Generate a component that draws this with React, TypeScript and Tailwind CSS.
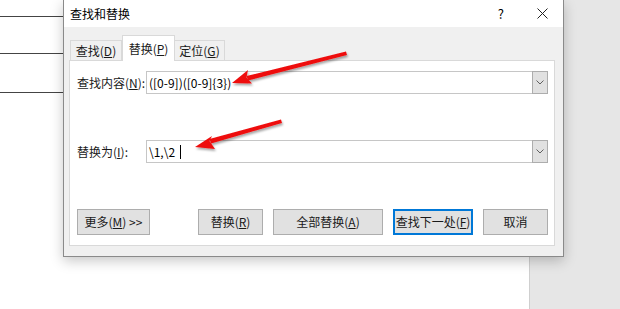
import React from 'react'

const font = { fontFamily: '"Noto Sans CJK SC", "Liberation Sans", sans-serif' }

function Dropdown() {
  return (
    <div className="w-[16px] h-full border border-[#adadad] bg-[#e1e1e1] flex items-center justify-center">
      <svg width="8" height="5" viewBox="0 0 8 5">
        <path d="M0.5 0.5 L4 4 L7.5 0.5" fill="none" stroke="#606060" strokeWidth="1" />
      </svg>
    </div>
  )
}

function Field({ label, value, cursor }: { label: React.ReactNode; value: string; cursor?: boolean }) {
  return (
    <div className="flex items-center h-[23px]">
      <div className="w-[69px] shrink-0 text-[12px] text-[#1a1a1a] leading-none">{label}</div>
      <div className="flex-1 h-full flex border border-[#c6c6c6] bg-white">
        <div className="flex-1 flex items-center pl-[2px] text-[12px] text-black">
          <span className="whitespace-pre">{value}</span>
          {cursor && <span className="ml-[2px] w-px h-[14px] bg-black" />}
        </div>
        <div className="-my-px -mr-px">
          <Dropdown />
        </div>
      </div>
    </div>
  )
}

function Btn({ children, w, primary }: { children: React.ReactNode; w: string; primary?: boolean }) {
  return (
    <div
      className={`${w} shrink-0 h-[26px] flex items-center justify-center text-[12px] text-[#1a1a1a] bg-[#e1e1e1] ${
        primary ? 'border-2 border-[#0078d7]' : 'border border-[#adadad]'
      }`}
    >
      {children}
    </div>
  )
}

export default function App() {
  return (
    <div className="relative w-[620px] h-[309px] overflow-hidden bg-white" style={font}>
      {/* document behind the dialog */}
      <div className="flex h-full">
        <div className="w-[529px] h-full bg-white flex flex-col">
          <div className="w-[64px] h-px bg-[#444] mt-[16px]" />
          <div className="w-[64px] h-px bg-[#444] mt-[36px]" />
          <div className="w-[64px] h-px bg-[#444] mt-[38px]" />
        </div>
        <div className="flex-1 h-full bg-[#e6e6e6] border-l border-[#cfcfcf]" />
      </div>

      {/* dialog */}
      <div className="absolute left-[63px] top-0 w-[501px] h-[257px] border border-t-0 border-[#8a8a8a] bg-[#f0f0f0] flex flex-col shadow-[0_4px_12px_rgba(0,0,0,0.22)]">
        <div className="h-[27px] bg-white flex items-center pl-[6px] pr-[15px] text-[12px] text-black">
          <span>查找和替换</span>
          <span className="ml-auto mr-[33px] text-[13px]">?</span>
          <svg width="11" height="11" viewBox="0 0 11 11">
            <path d="M0.5 0.5 L10.5 10.5 M10.5 0.5 L0.5 10.5" stroke="#222" strokeWidth="1" />
          </svg>
        </div>

        <div className="flex-1 flex flex-col pt-[8px] pl-[5px] pr-[8px] pb-[10px]">
          {/* tabs */}
          <div className="flex items-end h-[25px] pl-[1px]">
            <div className="w-[52px] h-[20px] border border-b-0 border-[#d9d9d9] flex items-center justify-center text-[12px] text-[#1a1a1a]">
              <span>查找(<u>D</u>)</span>
            </div>
            <div className="w-[53px] h-[26px] -mb-px border border-b-0 border-[#d9d9d9] bg-white flex items-center justify-center text-[12px] text-[#1a1a1a] relative z-10">
              <span>替换(<u>P</u>)</span>
            </div>
            <div className="w-[50px] h-[20px] border border-b-0 border-l-0 border-[#d9d9d9] flex items-center justify-center text-[12px] text-[#1a1a1a]">
              <span>定位(<u>G</u>)</span>
            </div>
          </div>

          {/* panel */}
          <div className="flex-1 bg-white border border-[#d9d9d9] flex flex-col pl-[7px] pr-[6px] pt-[10px]">
            <Field label={<span>查找内容(<u>N</u>):</span>} value="([0-9])([0-9]{3})" />
            <div className="mt-[46px]">
              <Field label={<span>替换为(<u>I</u>):</span>} value="\1,\2 " cursor />
            </div>
            <div className="mt-[46px] flex">
              <Btn w="w-[73px]">
                <span>更多(<u>M</u>) &gt;&gt;</span>
              </Btn>
              <div className="ml-[48px] flex gap-[10px]">
                <Btn w="w-[65px]">
                  <span>替换(<u>R</u>)</span>
                </Btn>
                <Btn w="w-[110px]">
                  <span>全部替换(<u>A</u>)</span>
                </Btn>
                <Btn w="w-[80px]" primary>
                  <span>查找下一处(<u>F</u>)</span>
                </Btn>
                <Btn w="w-[65px]">
                  <span>取消</span>
                </Btn>
              </div>
            </div>
          </div>
        </div>
      </div>

      {/* red annotation arrows */}
      <svg className="absolute inset-0" width="620" height="309" viewBox="0 0 620 309">
        <defs>
          <filter id="sh" x="-20%" y="-50%" width="140%" height="200%">
            <feDropShadow dx="1" dy="2" stdDeviation="1.2" floodColor="#000" floodOpacity="0.35" />
          </filter>
        </defs>
        <g filter="url(#sh)" fill="#ee1111">
          <polygon points="346,51.5 347,55 248,80.5 246.5,76" />
          <polygon points="232,83 248,70 246.5,77.5 252,83.5" />
          <polygon points="281,119.5 282,123 211,143.5 209.5,139" />
          <polygon points="195,147 212,136 209.5,141 215,149" />
        </g>
      </svg>
    </div>
  )
}
